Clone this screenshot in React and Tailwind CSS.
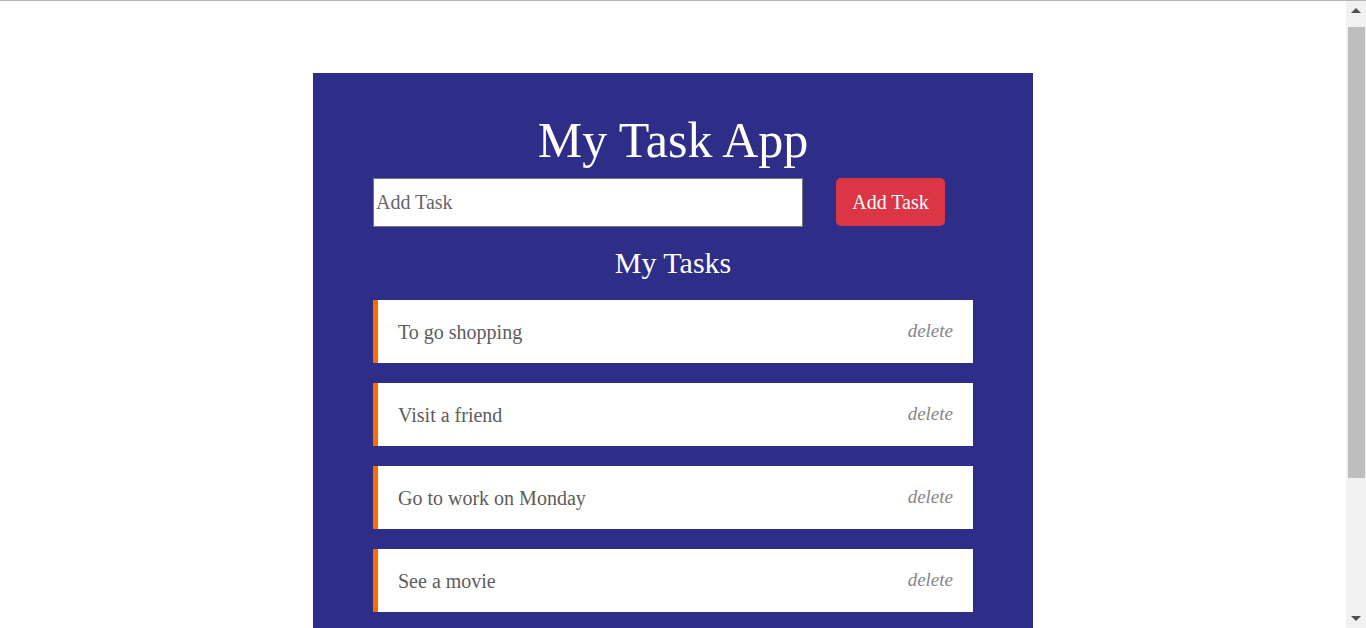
import React from "react";

const tasks = ["To go shopping", "Visit a friend", "Go to work on Monday", "See a movie"];

function FakeScrollbar() {
  return (
    <div className="fixed right-0 top-[1px] bottom-0 flex w-[20px] flex-col bg-[#f1f1f1]">
      <div className="flex h-[17px] items-center justify-center pt-[3px]">
        <svg width="10" height="6" viewBox="0 0 10 6">
          <polygon points="5,0 10,5 0,5" fill="#505050" />
        </svg>
      </div>
      <div className="ml-[2px] mr-[1px] mt-[9px] h-[451px] bg-[#bebebe]" />
      <div className="flex-1" />
      <div className="flex h-[17px] items-start justify-center pt-[5px]">
        <svg width="10" height="6" viewBox="0 0 10 6">
          <polygon points="0,0 10,0 5,5" fill="#505050" />
        </svg>
      </div>
    </div>
  );
}

export default function App() {
  return (
    <div
      className="relative min-h-[824px] border-t border-[#b4b4b4] bg-white"
      style={{ fontFamily: '"Liberation Serif", "Times New Roman", serif' }}
    >
      <div className="mr-[20px] pt-[72px] pb-[73px]">
        <div className="mx-auto w-[720px] bg-[#2e2d88] px-[60px] pt-[40px] pb-[139px]">
          <h1 className="text-center text-[50px] leading-[54px] text-white">My Task App</h1>
          <div className="mt-[11px] flex items-start gap-[33px]">
            <input
              type="text"
              placeholder="Add Task"
              className="h-[49px] w-[430px] border border-[#767676] bg-white px-[2px] text-[20px] text-[#333] placeholder:text-[#666] outline-none"
            />
            <button className="h-[48px] w-[109px] rounded-[5px] bg-[#dc3545] text-[20px] text-white">
              Add Task
            </button>
          </div>
          <h2 className="mt-[20px] text-center text-[30px] leading-[32px] text-white">My Tasks</h2>
          <ul className="mt-[21px] flex flex-col gap-[20px]">
            {tasks.map((t) => (
              <li
                key={t}
                className="flex h-[63px] items-center justify-between border-l-[5px] border-[#ff6a00] bg-white pl-[20px] pr-[20px]"
              >
                <span className="text-[20px] text-[#5c5c5c]">{t}</span>
                <span className="text-[19px] italic text-[#868686]">delete</span>
              </li>
            ))}
          </ul>
        </div>
      </div>
      <FakeScrollbar />
    </div>
  );
}
